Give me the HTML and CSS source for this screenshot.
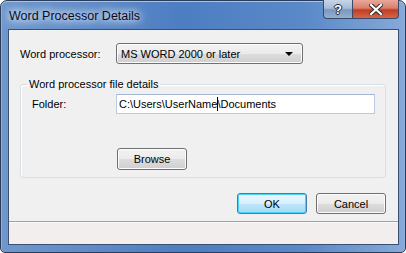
FILE: index.html
```html
<!DOCTYPE html>
<html lang="en">
<head>
    <meta charset="UTF-8">
    <title>Word Processor Details</title>
    <link rel="stylesheet" href="styles.css">
</head>
<body>
    <div class="window">
        <!-- Title bar -->
        <div class="titlebar">
            <span class="title">Word Processor Details</span>
            <div class="caption-buttons">
                <div class="cap-btn help">?</div>
                <div class="cap-btn close">
                    <svg width="14" height="11" viewBox="0 0 14 11">
                        <path d="M2 1 L12 10 M12 1 L2 10" stroke="#3a2a2a" stroke-width="4.2" stroke-linecap="square"/>
                        <path d="M2 1 L12 10 M12 1 L2 10" stroke="#ffffff" stroke-width="2.2" stroke-linecap="square"/>
                    </svg>
                </div>
            </div>
        </div>

        <div class="client">
            <div class="form-row top-row">
                <label class="label wide">Word processor:</label>
                <div class="combo">
                    <span>MS WORD 2000 or later</span>
                    <span class="combo-arrow"></span>
                </div>
            </div>

            <fieldset class="group">
                <legend>Word processor file details</legend>
                <div class="form-row">
                    <label class="label">Folder:</label>
                    <div class="textbox">C:\Users\UserName<span class="ibeam"></span>\Documents</div>
                </div>
                <div class="browse-row">
                    <button class="btn">Browse</button>
                </div>
            </fieldset>

            <div class="footer">
                <button class="btn default">OK</button>
                <button class="btn">Cancel</button>
            </div>
            <div class="status-strip"></div>
        </div>
    </div>
</body>
</html>
```

FILE: styles.css
```css
body {
    margin: 0;
    padding: 0;
    font-family: 'Liberation Sans', Arial, sans-serif;
    font-size: 11px;
    color: #000;
    background: #fff;
}

.window {
    box-sizing: border-box;
    width: 406px;
    height: 253px;
    display: flex;
    flex-direction: column;
    border: 1px solid #2b3c58;
    border-radius: 7px 7px 5px 5px;
    padding: 0 6px 7px 7px;
    background: linear-gradient(90deg, #6f97cc 0%, #4d7ec2 45%, #5a89c8 75%, #86a9d8 100%);
    box-shadow: inset 0 1px 0 #a9c3e4, inset 1px 0 0 #8fb0dc, inset -1px 0 0 #8fb0dc;
}

.titlebar {
    height: 28px;
    display: flex;
    align-items: flex-start;
    flex-shrink: 0;
}

.title {
    margin-top: 8px;
    margin-left: 1px;
    font-size: 12.5px;
    line-height: 14px;
    color: #0b0b1e;
    text-shadow: 0 0 6px #e4eefa, 0 0 10px #dce8f7, 0 0 14px #d2e2f5;
}

.caption-buttons {
    margin-left: auto;
    margin-top: -1px;
    display: flex;
}

.cap-btn {
    box-sizing: border-box;
    height: 19px;
    display: flex;
    align-items: center;
    justify-content: center;
    border: 1px solid #3a4a66;
    border-top: none;
}

.help {
    width: 29px;
    border-radius: 0 0 0 4px;
    border-right: none;
    background: linear-gradient(180deg, #c6d5e8 0%, #a8bcd7 45%, #7c98c0 55%, #93afd3 100%);
    color: #fff;
    font-weight: bold;
    font-size: 13px;
    text-shadow: 0 0 1px #1e2a40, 1px 0 0 #1e2a40, -1px 0 0 #1e2a40, 0 1px 0 #1e2a40, 0 -1px 0 #1e2a40;
}

.close {
    width: 47px;
    border-radius: 0 0 4px 0;
    background: linear-gradient(180deg, #e8a89a 0%, #d7806c 45%, #c23c22 55%, #d4664a 100%);
}

.client {
    flex: 1;
    display: flex;
    flex-direction: column;
    border: 1px solid #3b4f70;
    background: #f0f0f0;
}

.form-row {
    display: flex;
    align-items: center;
}

.top-row {
    margin-top: 13px;
    padding-left: 11px;
}

.label {
    width: 84px;
    flex-shrink: 0;
    line-height: 14px;
}

.label.wide {
    width: 96px;
}

.combo {
    box-sizing: border-box;
    width: 187px;
    height: 21px;
    display: flex;
    align-items: center;
    padding: 0 9px 0 4px;
    border: 1px solid #707070;
    border-radius: 3px;
    background: linear-gradient(180deg, #f2f2f2 0%, #ebebeb 50%, #dddddd 51%, #cfcfcf 100%);
    box-shadow: inset 0 0 0 1px #fcfcfc;
}

.combo-arrow {
    margin-left: auto;
    width: 0;
    height: 0;
    border-left: 4px solid transparent;
    border-right: 4px solid transparent;
    border-top: 4px solid #000;
}

.group {
    margin: 14px 12px 0 11px;
    padding: 3px 10px 7px 11px;
    border: 1px solid #d5dfe5;
    border-radius: 3px;
    box-shadow: inset 1px 1px 0 #fff;
}

.group legend {
    padding: 0 2px;
    margin-left: -5px;
    line-height: 13px;
}

.textbox {
    box-sizing: border-box;
    width: 259px;
    height: 20px;
    display: flex;
    align-items: center;
    padding-left: 2px;
    background: #fff;
    border: 1px solid #b9cbe2;
    border-top-color: #a2b6d0;
    white-space: pre;
}

.ibeam {
    display: inline-block;
    width: 1px;
    height: 14px;
    margin-right: -1px;
    background: #000;
}

.browse-row {
    margin-top: 34px;
    padding-left: 85px;
}

.btn {
    box-sizing: border-box;
    width: 70px;
    height: 21px;
    padding: 0;
    font-family: 'Liberation Sans', Arial, sans-serif;
    font-size: 11px;
    color: #000;
    border: 1px solid #707070;
    border-radius: 3px;
    background: linear-gradient(180deg, #f2f2f2 0%, #ebebeb 50%, #dddddd 51%, #cfcfcf 100%);
    box-shadow: inset 0 0 0 1px #fcfcfc;
}

.browse-row .btn {
    height: 22px;
}

.btn.default {
    border-color: #3c7fb1;
    background: linear-gradient(180deg, #eaf6fd 0%, #d9f0fc 50%, #bee6fd 51%, #a7d9f5 100%);
    box-shadow: inset 0 0 0 1px #48d2f3;
}

.footer {
    display: flex;
    justify-content: flex-end;
    gap: 9px;
    margin-top: 15px;
    padding: 0 12px 7px 0;
    border-bottom: 1px solid #a0a0a0;
}

.status-strip {
    flex: 1;
    background: #f2eeee;
    border-top: 1px solid #fbfbfb;
}
```
